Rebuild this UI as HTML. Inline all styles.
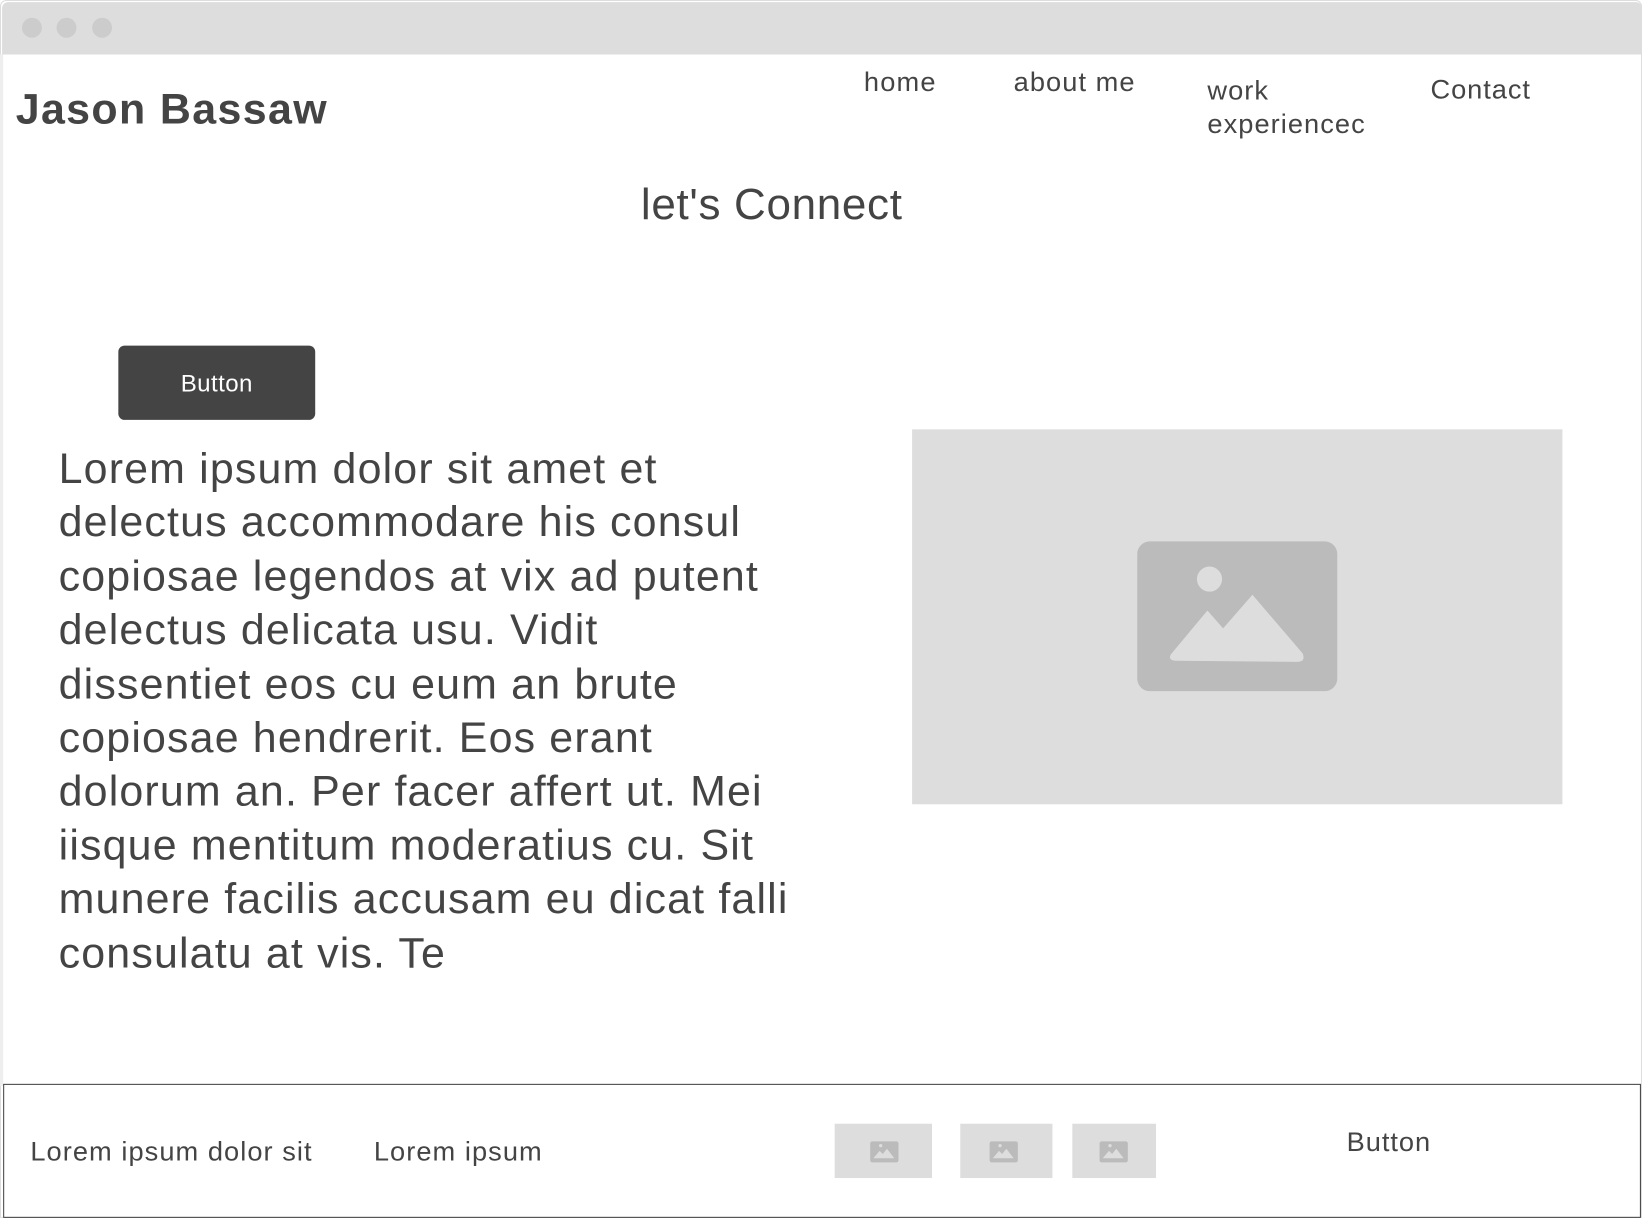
<!DOCTYPE html>
<html><head><meta charset="utf-8"><style>
html,body{margin:0;padding:0;background:#fff;overflow:hidden;width:1642px;height:1218px}
#w{position:absolute;left:0;top:0;width:1568px;height:1163px;transform:scale(1.04719);transform-origin:0 0;font-family:"Liberation Sans",sans-serif;color:#444}
.a{position:absolute;white-space:nowrap}
</style></head><body><div id="w">
<div class="a" style="left:0;top:0;width:1566px;height:1161px;border:1px solid #ddd;border-radius:6px 6px 0 0"></div>
<div class="a" style="left:2px;top:2px;width:1566px;height:50px;background:#ddd;border-radius:6px 6px 0 0"></div>
<div class="a" style="left:21px;top:17px;width:19px;height:19px;border-radius:50%;background:#ccc"></div>
<div class="a" style="left:54px;top:17px;width:19px;height:19px;border-radius:50%;background:#ccc"></div>
<div class="a" style="left:88px;top:17px;width:19px;height:19px;border-radius:50%;background:#ccc"></div>
<div class="a" style="left:0;top:52px;width:3px;height:985px;background:#eee"></div>
<div class="a" style="left:15px;top:81px;font-size:41px;font-weight:bold;letter-spacing:1.3px">Jason Bassaw</div>
<div class="a" style="left:825px;top:63px;font-size:26px;letter-spacing:1.1px">home</div>
<div class="a" style="left:968px;top:63px;font-size:26px;letter-spacing:1px">about me</div>
<div class="a" style="left:1153px;top:70px;font-size:26px;line-height:32px;letter-spacing:1px">work<br>experiencec</div>
<div class="a" style="left:1366px;top:70px;font-size:26px;letter-spacing:0.9px">Contact</div>
<div class="a" style="left:612px;top:171px;font-size:42px;letter-spacing:0.65px">let's Connect</div>
<div class="a" style="left:113px;top:330px;width:188px;height:71px;background:#444;border-radius:6px;color:#fff;font-size:23px;text-align:center;line-height:72px;letter-spacing:0.4px">Button</div>
<div class="a" style="left:56px;top:422px;font-size:41px;letter-spacing:1.1px;line-height:51.4px;white-space:nowrap">Lorem ipsum dolor sit amet et<br>delectus accommodare his consul<br>copiosae legendos at vix ad putent<br>delectus delicata usu. Vidit<br>dissentiet eos cu eum an brute<br>copiosae hendrerit. Eos erant<br>dolorum an. Per facer affert ut. Mei<br>iisque mentitum moderatius cu. Sit<br>munere facilis accusam eu dicat falli<br>consulatu at vis. Te</div>
<div class="a" style="left:871px;top:410px;width:621px;height:358px;background:#ddd">
<svg width="621" height="358" style="position:absolute;left:0;top:0"><rect x="215" y="107" width="191" height="143" rx="12" fill="#bbb"/><circle cx="284" cy="143" r="12" fill="#ddd"/><path d="M247 215 L282 173 L297 190 L325 158 L373 214 Q376 222 368 222 L253 221 Q244 221 247 215Z" fill="#ddd"/></svg></div>
<div class="a" style="left:3px;top:1035px;width:1562px;height:126px;border:1px solid #444"></div>
<div class="a" style="left:29px;top:1084px;font-size:26px;letter-spacing:1px">Lorem ipsum dolor sit</div>
<div class="a" style="left:357px;top:1084px;font-size:26px;letter-spacing:1px">Lorem ipsum</div>
<div class="a" style="left:1286px;top:1075px;font-size:26px;letter-spacing:0.9px">Button</div>
<svg class="a" style="left:797px;top:1073px" width="307" height="52">
<g fill="#ddd"><rect x="0" y="0" width="93" height="52"/><rect x="120" y="0" width="88" height="52"/><rect x="227" y="0" width="80" height="52"/></g>
<g fill="#bbb"><rect x="34" y="17" width="27" height="20" rx="2"/><rect x="148" y="17" width="27" height="20" rx="2"/><rect x="253" y="17" width="27" height="20" rx="2"/></g>
<g fill="#ddd"><path d="M37 33l6-7 3 3 4-5 7 9z"/><circle cx="44" cy="21" r="1.6"/><path d="M151 33l6-7 3 3 4-5 7 9z"/><circle cx="158" cy="21" r="1.6"/><path d="M256 33l6-7 3 3 4-5 7 9z"/><circle cx="263" cy="21" r="1.6"/></g>
</svg>
</div></body></html>
